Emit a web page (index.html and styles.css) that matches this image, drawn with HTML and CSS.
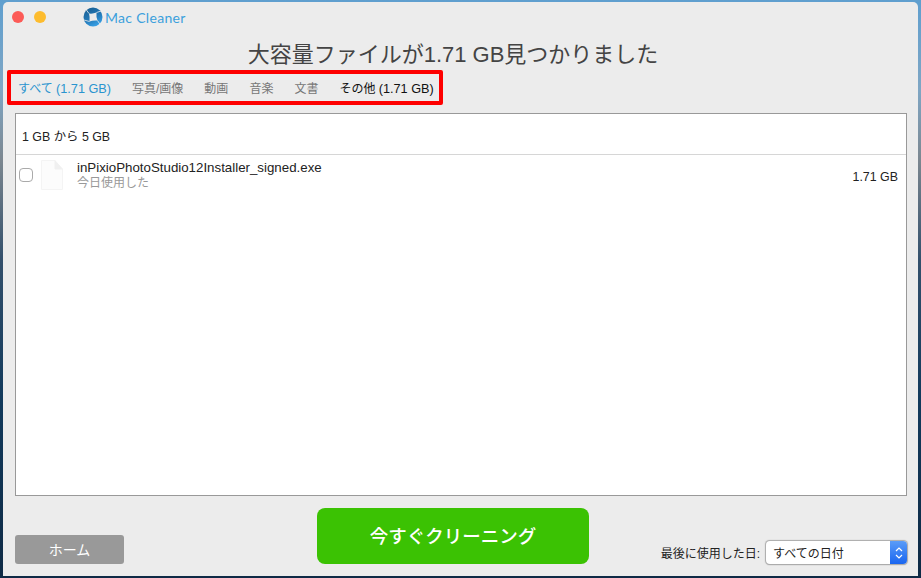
FILE: index.html
```html
<!DOCTYPE html>
<html lang="ja">
<head>
<meta charset="UTF-8">
<meta name="viewport" content="width=device-width, initial-scale=1.0">
<title>Mac Cleaner</title>
<link rel="stylesheet" href="styles.css">
</head>
<body>

<div class="window">
    <div class="titlebar">
        <span class="light light-red"></span>
        <span class="light light-yellow"></span>
        <div class="brand">
            <svg class="brand-logo" width="20" height="20" viewBox="0 0 20 20">
                <defs>
                    <linearGradient id="logo-fill" x1="0.2" y1="0" x2="0.7" y2="1">
                        <stop offset="0" stop-color="#1a5f92"/>
                        <stop offset="0.55" stop-color="#2379b8"/>
                        <stop offset="1" stop-color="#3aa4ea"/>
                    </linearGradient>
                </defs>
                <circle cx="10" cy="10" r="9.5" fill="url(#logo-fill)"/>
                <path d="M6 6.5Q10 7 13.5 5.5 13 10 14.5 13.5 10 13 6.5 14.5 7 10 6 6.5Z" fill="#ececec"/>
                <path d="M6 6.5L3 2.5M13.5 5.5L18 4M14.5 13.5L17.5 18M6.5 14.5L1 13" stroke="#ececec" stroke-width="0.8"/>
            </svg>
            <span>Mac Cleaner</span>
        </div>
    </div>

    <h1 class="heading">大容量ファイルが1.71 GB見つかりました</h1>

    <div class="tabs">
        <span class="tab tab-active">すべて <span class="tab-size">(1.71 GB)</span></span>
        <span class="tab">写真/画像</span>
        <span class="tab">動画</span>
        <span class="tab">音楽</span>
        <span class="tab">文書</span>
        <span class="tab tab-dark">その他 <span class="tab-size">(1.71 GB)</span></span>
    </div>

    <div class="file-list">
        <div class="group-header">1 GB から 5 GB</div>
        <div class="file-row">
            <span class="checkbox"></span>
            <svg class="file-icon" width="22" height="30" viewBox="0 0 22 30">
                <path d="M0.5 0.5H14L21.5 9V29.5H0.5Z" fill="#fcfcfc" stroke="#f4f4f4"/>
                <path d="M14 0.5V9H21.5" fill="#f0f0f0" stroke="#f0f0f0"/>
            </svg>
            <div class="file-info">
                <div class="file-name">inPixioPhotoStudio12Installer_signed.exe</div>
                <div class="file-used">今日使用した</div>
            </div>
            <div class="file-size">1.71 GB</div>
        </div>
    </div>

    <div class="footer">
        <button class="home-button">ホーム</button>
        <button class="clean-button">今すぐクリーニング</button>
        <div class="date-filter">
            <span class="date-label">最後に使用した日:</span>
            <div class="date-select">
                <span class="date-value">すべての日付</span>
                <span class="date-arrows">
                    <svg width="8" height="14" viewBox="0 0 8 14">
                        <path d="M1 5L4 2 7 5M1 9L4 12 7 9" fill="none" stroke="#fff" stroke-width="1.2"/>
                    </svg>
                </span>
            </div>
        </div>
    </div>
</div>

</body>
</html>
```

FILE: styles.css
```css
* {
    box-sizing: border-box;
}

body {
    margin: 0;
    height: 578px;
    overflow: hidden;
    padding: 2px 3px;
    font-family: "Liberation Sans", "Noto Sans CJK JP", sans-serif;
    background: linear-gradient(#5f9fcf 0, #7fa6c4 90px, #7c8790 160px, #33506c 260px, #123a5c 400px, #0e2a45 578px);
}

.window {
    width: 915px;
    height: 574px;
    background-color: #ececec;
    border-radius: 5px 5px 0 0;
    display: flex;
    flex-direction: column;
}

.titlebar {
    height: 30px;
    flex: none;
    display: flex;
    align-items: center;
    padding-left: 9px;
}

.light {
    width: 12px;
    height: 12px;
    border-radius: 50%;
    margin-right: 10px;
}

.light-red {
    background-color: #fc5b57;
}

.light-yellow {
    background-color: #fdbc2e;
}

.brand {
    display: flex;
    align-items: center;
    margin-left: 27px;
    font-family: Lato, "Liberation Sans", sans-serif;
    font-size: 14px;
    letter-spacing: 0.3px;
    color: #3ba0dc;
}

.brand-logo {
    margin-right: 2px;
}

.heading {
    margin: 0;
    height: 38px;
    flex: none;
    padding: 8px 15px 0 0;
    text-align: center;
    font-size: 22px;
    line-height: 30px;
    font-weight: normal;
    color: #444;
}

.tabs {
    width: 436px;
    height: 35px;
    flex: none;
    margin-left: 4px;
    padding-left: 7px;
    border: 4px solid #fe0000;
    border-radius: 2px;
    display: flex;
    align-items: center;
    gap: 21px;
    font-size: 12px;
    color: #777;
}

.tab-size {
    font-size: 12.7px;
}

.tab-active {
    color: #2a94cf;
}

.tab-dark {
    color: #111;
}

.file-list {
    width: 892px;
    height: 383px;
    flex: none;
    margin: 8px 0 0 12px;
    background: #fff;
    border: 1px solid #999;
}

.group-header {
    height: 41px;
    border-bottom: 1px solid #d6d6d6;
    padding-left: 6px;
    font-size: 12.4px;
    line-height: 46px;
    color: #222;
}

.file-row {
    display: flex;
    align-items: flex-start;
    padding: 5px 8px 0 3px;
}

.checkbox {
    width: 14px;
    height: 14px;
    margin-top: 8px;
    background: #fff;
    border: 1px solid #aaa;
    border-radius: 4px;
}

.file-icon {
    margin-left: 8px;
}

.file-info {
    flex: 1;
    margin-left: 14px;
}

.file-name {
    font-size: 13.3px;
    line-height: 15px;
    color: #222;
}

.file-used {
    margin-top: 1px;
    font-size: 12px;
    line-height: 15px;
    color: #999;
}

.file-size {
    margin-top: 10px;
    font-size: 12.4px;
    line-height: 15px;
    color: #222;
}

.footer {
    flex: 1;
    display: flex;
    align-items: flex-end;
    padding: 0 11px 12px 12px;
}

.home-button {
    width: 109px;
    height: 29px;
    padding-bottom: 3px;
    background-color: #999;
    color: #fff;
    border: none;
    border-radius: 3px;
    font-family: inherit;
    font-size: 14px;
}

.clean-button {
    width: 272px;
    height: 56px;
    margin-left: 193px;
    padding-bottom: 4px;
    background-color: #3bc203;
    color: #fff;
    border: none;
    border-radius: 8px;
    font-family: inherit;
    font-size: 18.5px;
    font-weight: 500;
}

.date-filter {
    margin-left: auto;
    display: flex;
    align-items: center;
    gap: 6px;
}

.date-label {
    font-size: 12px;
    color: #222;
}

.date-select {
    width: 141px;
    height: 23px;
    background: #fff;
    border-radius: 4px;
    box-shadow: 0 0 1px 0.5px #aaa, 0 1px 1px #bbb;
    display: flex;
    align-items: center;
    justify-content: space-between;
    overflow: hidden;
}

.date-value {
    padding-left: 7px;
    font-size: 12px;
    color: #222;
}

.date-arrows {
    width: 17px;
    height: 23px;
    background: linear-gradient(#5a9cf8, #1a66f0);
    display: flex;
    align-items: center;
    justify-content: center;
}
```
